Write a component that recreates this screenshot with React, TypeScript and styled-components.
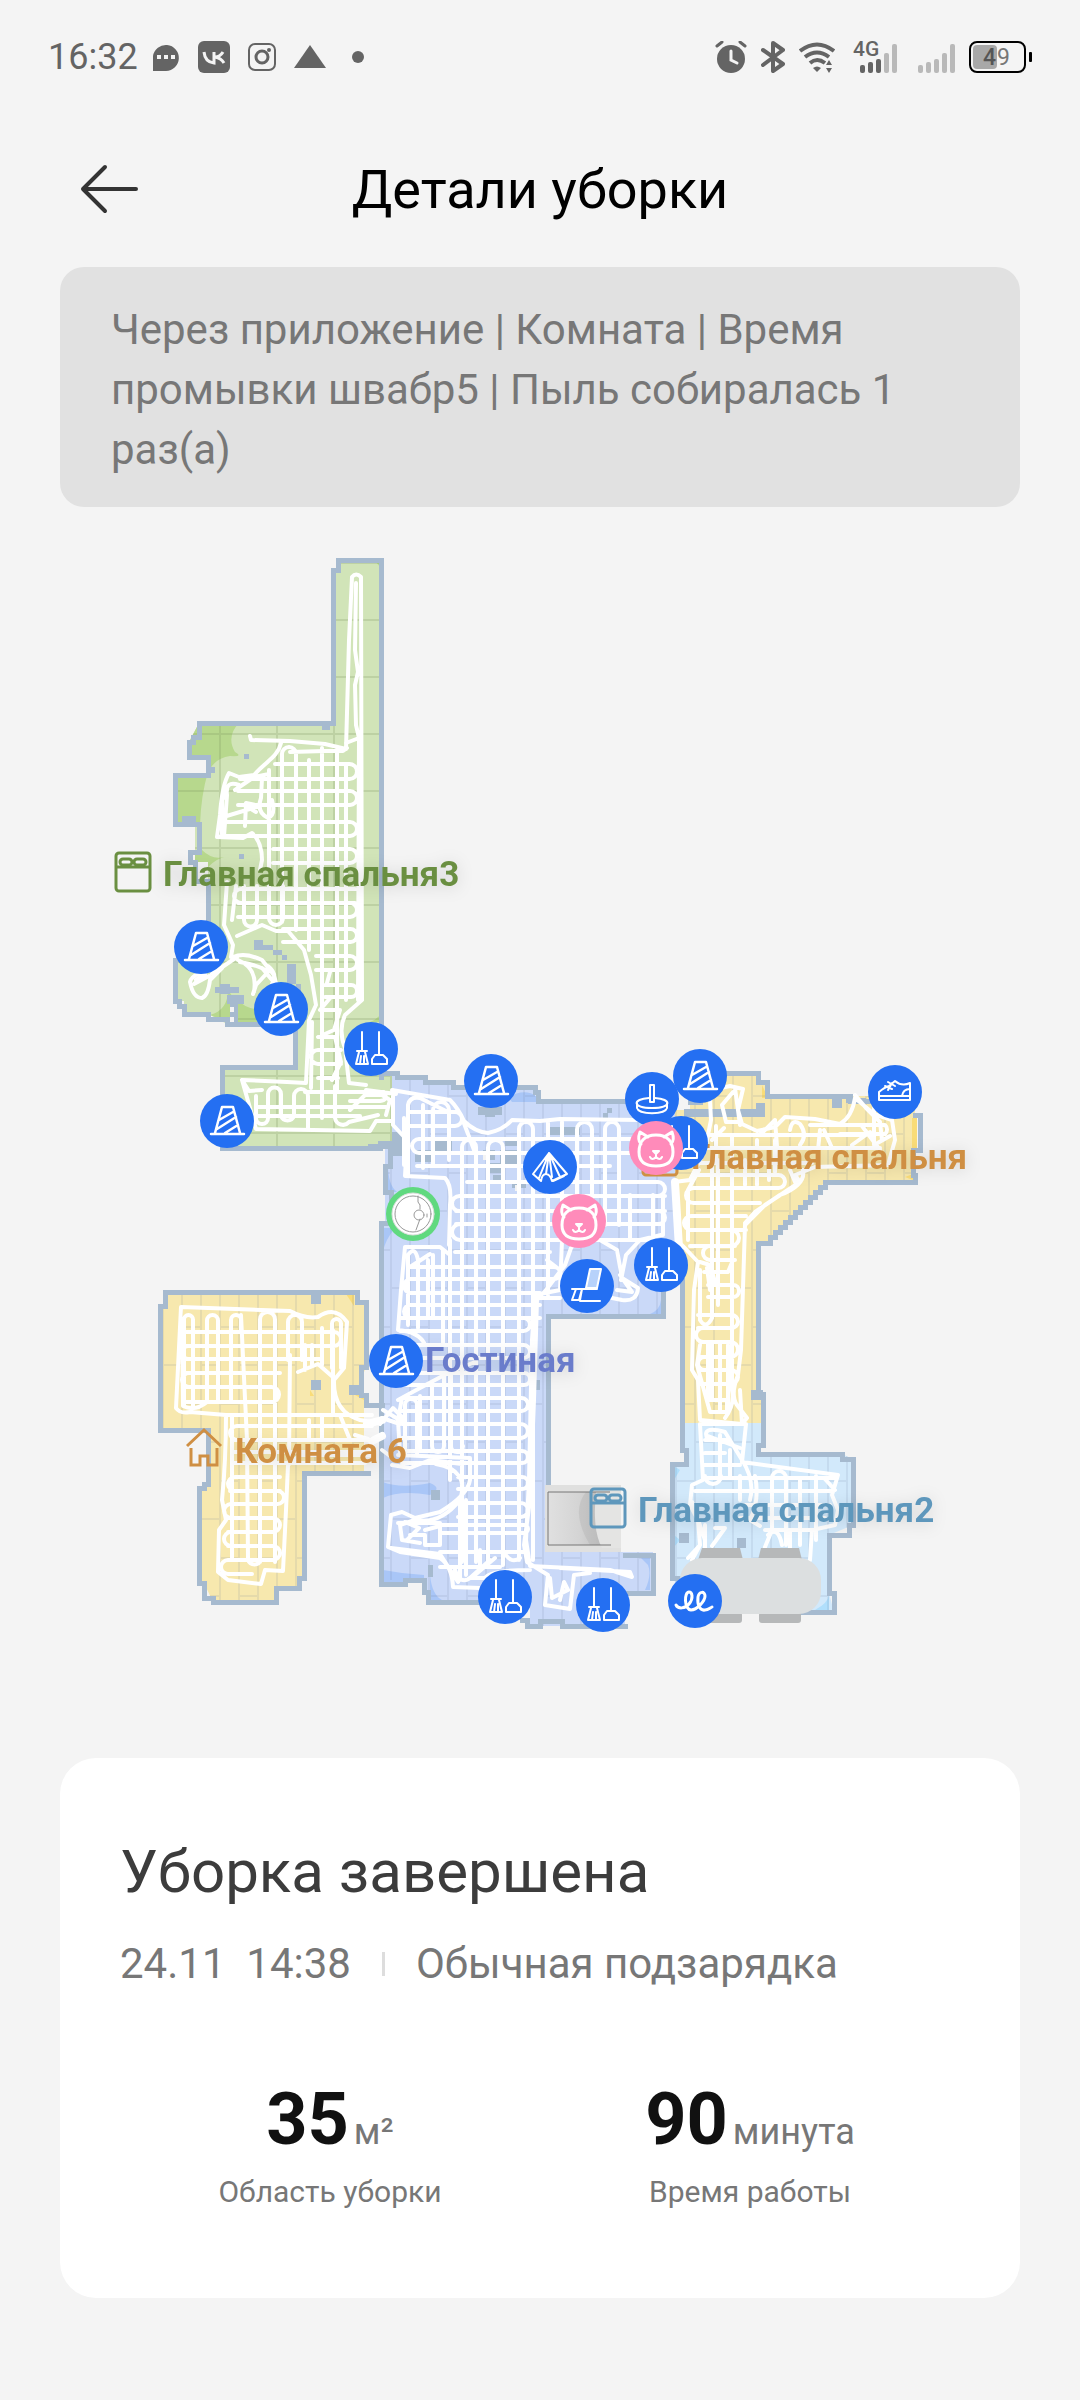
import React from "react";
import styled, { createGlobalStyle } from "styled-components";

const GlobalStyle = createGlobalStyle`
  * { box-sizing: border-box; }
  body {
    margin: 0;
    background: #f4f4f4;
    font-family: Roboto, "Noto Sans", sans-serif;
    color: #777;
  }
  h1, h2, p, dl, dt, dd { margin: 0; font-weight: 400; }
`;

const Page = styled.div`
  display: flex;
  flex-direction: column;
  min-height: 100vh;
`;

const StatusBar = styled.header`
  display: flex;
  align-items: center;
  justify-content: space-between;
  height: 114px;
  padding: 0 48px;
`;

const StatusGroup = styled.div<{ $gap: number }>`
  display: flex;
  align-items: center;
  gap: ${(p) => p.$gap}px;
`;

const Clock = styled.time`
  font-size: 36px;
  line-height: 40px;
  color: #646464;
`;

const Glyph = styled.svg`
  display: block;
  flex: none;
`;

const TitleBar = styled.div`
  display: grid;
  grid-template-columns: 96px 1fr 96px;
  align-items: center;
  height: 153px;
  padding: 0 60px 2px;
`;

const BackButton = styled.button`
  display: flex;
  align-items: center;
  justify-content: center;
  width: 96px;
  height: 96px;
  border: 0;
  padding: 0;
  background: none;
  color: #333;
`;

const Title = styled.h1`
  font-size: 54px;
  line-height: 64px;
  text-align: center;
  color: #000;
`;

const Notice = styled.p`
  margin: 0 60px;
  padding: 33px 51px 27px;
  border-radius: 24px;
  background: #e1e1e1;
  font-size: 42px;
  line-height: 60px;
`;

const MapFigure = styled.figure`
  margin: 0;
`;

const MapCanvas = styled.svg`
  display: block;
  width: 100%;
  height: auto;
`;

const RoomName = styled.text`
  font: 700 35px Roboto, "Noto Sans", sans-serif;
  filter: drop-shadow(0 2px 8px rgba(0, 0, 0, 0.14));
`;

const Summary = styled.section`
  display: flex;
  flex-direction: column;
  margin: 0 60px 102px;
  padding: 78px 60px 88px;
  border-radius: 36px;
  background: #fff;
`;

const SummaryTitle = styled.h2`
  font-size: 60px;
  line-height: 72px;
  color: #3c3c3c;
`;

const Meta = styled.div`
  display: flex;
  align-items: center;
  margin-top: 32px;
  font-size: 42px;
  line-height: 48px;
`;

const MetaTime = styled.time`
  white-space: pre;
`;

const Divider = styled.span`
  width: 3px;
  height: 24px;
  margin: 0 31px;
  background: #ddd;
`;

const Stats = styled.dl`
  display: grid;
  grid-template-columns: 1fr 1fr;
  margin-top: 90px;
`;

const Stat = styled.div`
  display: flex;
  flex-direction: column-reverse;
  align-items: center;
`;

const StatLabel = styled.dt`
  font-size: 30px;
  line-height: 36px;
`;

const StatValue = styled.dd`
  display: flex;
  align-items: baseline;
  gap: 5px;
  font-size: 36px;
  line-height: 84px;
`;

const StatNumber = styled.strong`
  font-size: 72px;
  font-weight: 700;
  color: #111;
`;

/* ---------- robot track helpers ---------- */

/* Horizontal passes, joined in pairs by a round turn at the right end. */
const rows = (x1: number, x2: number, ys: number[]) => {
  let d = "";
  for (let i = 0; i < ys.length; i += 2) {
    const a = ys[i];
    const b = ys[i + 1];
    if (b === undefined) d += `M${x1} ${a}H${x2}`;
    else {
      const r = (b - a) / 2;
      d += `M${x1} ${a}H${x2 - r}a${r} ${r} 0 0 1 0 ${b - a}H${x1}`;
    }
  }
  return d;
};

/* The same, with the turn at the left end. */
const rowsLeft = (x1: number, x2: number, ys: number[]) => {
  let d = "";
  for (let i = 0; i < ys.length; i += 2) {
    const a = ys[i];
    const b = ys[i + 1];
    if (b === undefined) d += `M${x1} ${a}H${x2}`;
    else {
      const r = (b - a) / 2;
      d += `M${x2} ${a}H${x1 + r}a${r} ${r} 0 0 0 0 ${b - a}H${x2}`;
    }
  }
  return d;
};

/* Vertical passes, joined in pairs by a round turn at the top. */
const cols = (y1: number, y2: number, xs: number[]) => {
  let d = "";
  for (let i = 0; i < xs.length; i += 2) {
    const a = xs[i];
    const b = xs[i + 1];
    if (b === undefined) d += `M${a} ${y1}V${y2}`;
    else {
      const r = (b - a) / 2;
      d += `M${a} ${y2}V${y1 + r}a${r} ${r} 0 0 1 ${b - a} 0V${y2}`;
    }
  }
  return d;
};

const TRACKS = [
  // upper-left bedroom
  "M250 736L251 740L290 741L325 744L346 749L349 640L352 577Q356 572 361 577L362 1000",
  "M356 583L355 650L358 672L355 685L356 725L359 738L358 1000M359 738L346 743",
  "M347 748L343 751H325L290 752",
  "M281 743C278 757 265 762 254 775L239 777L229 773Q222 785 220 815L217 837L243 838L252 833Q262 842 262 860L260 870",
  "M239 785Q225 780 227 795L224 836M235 790L254 777L269 774M262 778L261 798Q256 812 268 818Q276 815 272 800M220 818L260 806L246 803L245 826M246 806L256 812",
  "M227 790L222 800V834M227 882L224 925L233 945L231 957M236 886L232 920",
  rows(275, 357, [764, 779, 791, 805]),
  rows(238, 357, [791, 805]),
  rows(240, 346, [779]),
  rows(221, 357, [822, 836]),
  rows(273, 357, [849, 863]),
  rowsLeft(234, 355, [889, 903]),
  rows(238, 357, [903, 917]),
  rows(283, 357, [929, 942]),
  rows(316, 357, [956, 970]),
  rows(325, 357, [985, 997]),
  cols(747, 922, [282, 296]),
  cols(760, 930, [309]),
  cols(748, 1118, [322]),
  cols(750, 1090, [337]),
  cols(765, 1000, [346]),
  cols(770, 868, [269]),
  "M244 886V920a6 6 0 0 0 13 0V886M269 886V918a6 6 0 0 0 14 0V886M296 886V930M309 886V950",
  "M237 936L262 925L276 931L288 931L304 950L311 975L316 1005L309 1020L306 1083L287 1082L242 1080L256 1129L370 1131L376 1121H393",
  "M362 1000L345 1015Q338 1030 345 1048L349 1083L366 1085",
  "M331 997L320 1010H340L334 1030L318 1037H335L341 1062L332 1080M341 1050H318a7 7 0 0 0 0 14H341M318 1078H338M312 1022L311 1088M330 972L327 983",
  "M233 957Q245 952 262 960L274 975L276 983M240 962Q262 966 268 972L256 985L253 994M221 968Q192 972 190 982Q193 998 202 998Q208 996 210 980L222 968M196 980L205 974L194 984L209 976M238 960Q258 968 254 992M212 974L237 957M262 968L272 980M268 966Q278 974 272 984",
  "M242 1080L249 1091L262 1090M256 1096V1118a6 6 0 0 0 12 0V1094a6 6 0 0 1 13 0V1116a7 7 0 0 0 13 0V1096a5 5 0 0 1 14 0V1130M322 1088V1118M335 1086V1118a8 8 0 0 0 14 4L378 1115M350 1110L365 1095H382L390 1100L386 1115",
  "M256 1107H386M258 1116H360M305 1092H384q5 8 -4 9H350M366 1090L396 1094",
  // living room, upper part
  "M392 1090L450 1100Q458 1108 464 1121Q475 1132 488 1133Q503 1130 512 1120L540 1121L560 1119L640 1120L660 1124",
  "M393 1090V1125L407 1140L405 1176L445 1178Q452 1185 450 1205L449 1245",
  "M404 1118V1165M408 1176V1105Q410 1096 420 1098L448 1112M423 1168V1105M433 1165V1110a8 8 0 0 1 16 0V1160M462 1118L474 1150",
  rows(408, 462, [1112, 1126]),
  rowsLeft(412, 600, [1139, 1153]),
  rows(417, 610, [1166]),
  rows(467, 665, [1182, 1196]),
  rowsLeft(452, 665, [1196, 1211]),
  rows(456, 665, [1211, 1224]),
  rowsLeft(452, 660, [1224, 1240]),
  rows(455, 550, [1252]),
  rows(410, 560, [1267, 1279]),
  rowsLeft(404, 540, [1279, 1293, 1305, 1318]),
  rows(400, 530, [1318, 1331, 1345, 1358, 1373, 1385]),
  rows(402, 528, [1398, 1411, 1424, 1438, 1451, 1463]),
  rows(458, 528, [1477, 1489, 1503, 1517]),
  rows(440, 528, [1525, 1533]),
  rows(440, 525, [1552]),
  rows(440, 500, [1567]),
  rows(500, 640, [1139, 1153]),
  cols(1140, 1562, [462, 476]),
  cols(1140, 1565, [488, 503]),
  cols(1122, 1560, [519, 533]),
  cols(1122, 1295, [548]),
  cols(1122, 1240, [562]),
  cols(1122, 1240, [577, 592]),
  cols(1122, 1225, [605, 619]),
  "M562 1240L560 1290L535 1295L532 1340L529 1480L526 1540L530 1566L610 1570L632 1577L630 1572L560 1568",
  "M578 1240L571 1248L565 1265L546 1290L537 1300L534 1400L530 1500L524 1545L527 1562L548 1575L545 1605L570 1609L574 1575L590 1573",
  "M547 1260L560 1270M535 1298H560M600 1240L617 1250L622 1278L638 1288Q637 1302 622 1300L612 1298M617 1290L632 1292L620 1275M621 1280L626 1255L640 1240M653 1195V1240M663 1195V1235M630 1195V1240M640 1240L661 1235",
  "M405 1247H440L450 1255M405 1247L401 1290L398 1330Q420 1332 425 1345M408 1325V1255Q415 1245 418 1260V1328M428 1260V1318M410 1267L430 1254M433 1255V1318M443 1250V1345M450 1240V1480",
  // living room, lower part
  "M398 1400L420 1388L450 1372L475 1362M402 1398L398 1420L400 1454M420 1396V1450M432 1385V1446a6 6 0 0 0 12 0V1374M451 1370V1446a6 6 0 0 0 12 0M405 1454V1405a5 5 0 0 1 12 0V1454M380 1424L393 1408L405 1420M383 1410L403 1422M382 1450L390 1456",
  "M392 1465L410 1468L430 1460L462 1464M398 1455L470 1458V1480Q468 1495 440 1512L415 1518L402 1512L391 1515L388 1547L400 1552L440 1558Q452 1566 453 1587L480 1588",
  "M436 1464Q470 1470 460 1500Q440 1525 415 1520L400 1525L402 1540L420 1543M391 1548L440 1554L458 1582M410 1535H425V1545H440V1526L425 1530M398 1523H440V1535M460 1500V1580M407 1540L419 1528L405 1522M466 1500V1575M455 1570Q460 1585 470 1578L490 1560M470 1578H485Q490 1570 530 1570",
  "M503 1550Q510 1565 520 1558M550 1578L552 1598L568 1590L564 1582L560 1600M382 1418L400 1424M480 1567V1550M475 1575L495 1558",
  // left room
  "M176 1408L181 1307L290 1311Q305 1319 318 1317Q335 1305 347 1322L344 1368L334 1380Q333 1412 360 1420L378 1423",
  "M176 1408Q180 1414 190 1412L226 1415Q226 1460 222 1500L226 1520L219 1530L218 1572L228 1580L261 1584L265 1570L283 1571L286 1510L288 1465L300 1455H370",
  rows(184, 341, [1332, 1346]),
  rows(184, 320, [1359]),
  rows(186, 280, [1373]),
  rowsLeft(182, 270, [1346, 1359, 1373, 1387]),
  rows(186, 279, [1387, 1402]),
  rows(225, 372, [1415]),
  rowsLeft(230, 372, [1426, 1440]),
  rows(232, 372, [1440, 1452]),
  rows(232, 365, [1463]),
  rowsLeft(228, 280, [1477, 1491]),
  rows(230, 284, [1491, 1504]),
  rowsLeft(224, 274, [1504, 1518, 1532, 1546]),
  rows(228, 280, [1518, 1532, 1546, 1560]),
  rowsLeft(221, 252, [1560, 1574]),
  cols(1315, 1406, [184, 193]),
  cols(1315, 1400, [207, 218]),
  cols(1315, 1330, [231, 241]),
  cols(1312, 1562, [260, 275]),
  cols(1315, 1360, [288, 302]),
  cols(1319, 1368, [332, 341]),
  cols(1415, 1560, [232]),
  "M182 1320L183 1406Q195 1412 207 1402M231 1330V1400M241 1315L247 1440L248 1560a7 7 0 0 0 13 0M290 1355L289 1460M298 1372L318 1364L334 1378M305 1345V1370M312 1345V1366M322 1328V1365M309 1420V1440M333 1330V1414M322 1415V1440M340 1415L350 1440M355 1435L368 1439",
  // right bedroom
  "M710 1100L711 1120L705 1150L690 1180L674 1182M743 1089L738 1110L742 1124L757 1131L775 1127L785 1117L815 1119L840 1124Q852 1117 855 1098L874 1114L892 1120L895 1140L888 1165L815 1167L795 1175L800 1182L765 1205L745 1225L741 1350L738 1375Q730 1395 737 1405L747 1418L742 1424L700 1420L698 1380L692 1370L694 1290L698 1262L682 1245",
  "M712 1090L730 1086L743 1089M722 1105L733 1092M722 1105L726 1122H738M735 1088L740 1125M716 1126V1160M712 1140L724 1128M874 1102V1145L890 1136M855 1095L866 1108L880 1122L882 1140M760 1135L775 1120M775 1120L778 1160M790 1130Q792 1118 800 1124Q808 1135 800 1145M820 1130L818 1150M824 1130L832 1148M810 1125H885a6 6 0 0 1 0 9H840M862 1126L880 1150M870 1132L852 1145",
  "M803 1170Q806 1185 780 1195L755 1212L745 1223M790 1170L795 1182M700 1262L710 1265L716 1285M704 1272H728L733 1260M710 1290L707 1268M700 1345L697 1365L710 1412H727V1400H708M708 1343V1400M728 1345V1412L715 1412M742 1424L740 1390",
  rows(706, 860, [1135]),
  rows(704, 880, [1148]),
  rows(700, 812, [1163]),
  rows(694, 785, [1175, 1188]),
  rowsLeft(686, 760, [1188, 1203]),
  rowsLeft(684, 746, [1216, 1230]),
  rows(690, 739, [1230, 1246]),
  rowsLeft(703, 735, [1246, 1260]),
  rows(708, 739, [1285, 1297]),
  rows(698, 738, [1315, 1328]),
  rowsLeft(696, 732, [1328, 1342]),
  rows(700, 738, [1342, 1357]),
  rowsLeft(698, 732, [1357, 1370]),
  rows(700, 738, [1370, 1384]),
  "M699 1170L688 1190V1240M700 1270V1320Q706 1330 712 1318V1160M718 1160V1305M732 1135V1390Q735 1405 725 1418M745 1160V1185M757 1140V1185M769 1165V1180M775 1140V1172M712 1342V1400M720 1342V1410",
  // right bathroom
  "M700 1424H746L742 1462L838 1475L832 1495L838 1510L835 1525L812 1530L810 1560M700 1424L703 1480L692 1485L690 1505L698 1520L700 1545L688 1558",
  "M708 1440Q700 1425 725 1432L742 1460Q755 1480 750 1500M705 1440H730M705 1453H725M703 1465H740M720 1435V1478M730 1450V1478M708 1436L740 1448M705 1476a8 8 0 0 0 16 0M706 1478H835",
  "M695 1491H833M740 1476V1500M755 1476Q760 1500 750 1520L760 1526M772 1500V1478a7 7 0 0 1 14 0V1545M800 1480V1545M816 1476V1540M824 1478L835 1490M772 1500V1530L765 1547M692 1502L705 1540M715 1528H725L712 1546M768 1535Q778 1525 782 1545M765 1530H812M740 1505H830M740 1518H825M790 1530V1548M700 1545L692 1560M705 1525V1548",
].join("");

const WALL_LINES = [
  "M338 560H381V1077M338 560V570H333V723H199V737H193V742H189V757H208V775H175V824H199V852H190V862H195V881H208V940M175 960V1001H179V1006H184V1014H208V1019H227V1024H295V1067H222V1148H380V1143H392",
  "M386 1073H397V1077H425V1082H453V1087H535V1092H538V1101H640",
  "M370 1146H390V1166H385V1192H391V1210M381 1223H391M381 1223V1584H405V1580H424V1592H428V1602H480M522 1620H527V1626H540V1621H562V1626H625M625 1593H653V1555H625",
  "M548 1490V1316H663V1285",
  "M690 1102H700M720 1073H758V1082H767V1096H850V1101H880M915 1115H920V1150H913V1175H915V1182H825V1187H820V1192H815V1197H810V1202H805V1207H800V1212H795V1217H790V1222H785V1227H780V1232H775V1237H770V1243H758V1394H763V1445H758V1454H842V1459H853V1525H849V1535H829V1593H834V1612H800",
  "M682 1280V1450H686V1464H672V1578H682",
  "M165 1292H357V1302H366V1367H361V1395M366 1395V1405H382M368 1473H304V1578H299V1588H276V1602H213V1598H204V1583H199V1488H204V1484H208V1430H160V1306H165V1292",
].join("");

const OBSTACLES: [number, number, number, number][] = [
  [322, 723, 8, 7], [244, 754, 5, 5], [239, 854, 5, 5], [209, 767, 6, 6], [182, 816, 14, 6],
  [254, 940, 9, 10], [263, 945, 10, 5], [273, 950, 9, 5], [282, 955, 5, 5], [287, 964, 9, 20],
  [215, 987, 24, 6], [220, 984, 10, 10], [227, 995, 17, 9], [230, 1004, 8, 18], [296, 984, 5, 8],
  [478, 1107, 24, 8], [485, 1112, 10, 5], [607, 1108, 5, 5], [603, 1113, 5, 5],
  [392, 1132, 10, 24], [432, 1140, 20, 12], [415, 1150, 20, 12], [483, 1150, 12, 10], [490, 1163, 12, 10],
  [550, 1127, 30, 8], [500, 1150, 18, 14], [493, 1175, 9, 5], [505, 1140, 14, 6], [512, 1180, 14, 8],
  [311, 1292, 10, 12], [311, 1380, 10, 10], [349, 1385, 14, 10], [431, 1490, 9, 10], [533, 1380, 7, 10], [428, 1565, 5, 12],
  [684, 1109, 80, 8], [756, 1103, 9, 14], [832, 1096, 10, 12], [846, 1098, 20, 5], [751, 1390, 12, 10],
  [679, 1533, 10, 10], [737, 1538, 9, 10],
];

const GREEN_ROOM =
  "M338 560H381V1074H392V1146H222V1067H295V1024H227L208 1014H184V1001H175V960H208V862H195V824H175V775H208V757H189V742L199 723H333V570H338Z";
const LIVING_ROOM =
  "M392 1075H425V1082H453V1087H535V1101H675V1250H663V1316H548V1552H653V1593H625V1626H530V1602H428V1592H424V1580H381V1223H385V1146H392Z";
const RIGHT_ROOM =
  "M690 1073H758V1082H767V1096H915V1182H825L767 1243H758V1394H763V1423H682V1250H675V1110H690Z";
const BATH_ROOM =
  "M682 1423H763V1445L758 1454H842L853 1459V1525L829 1535V1593L834 1612H700L672 1578V1464H686V1450H682Z";
const LEFT_ROOM =
  "M165 1292H357V1302H366V1367L361 1380L364 1395V1473H304V1578H299V1588H276V1602H213L204 1583H199V1488L208 1484V1430H160V1306H165Z";

/* ---------- map pins ---------- */

type PinKind = "cone" | "broom" | "mop" | "tent" | "chair" | "cat" | "shoe" | "cable" | "dock";

const PIN_ART: Record<PinKind, React.ReactNode> = {
  cone: (
    <>
      <path d="M-16 13H17M-12 12L-5 -14H6L13 12M-8 -1L6 -9M-10 8L9 -4M-2 12L11 4" />
    </>
  ),
  broom: (
    <g strokeWidth="2">
      <path d="M-9 -17V2M-14 2H-4M-12 3L-15 15H-3L-6 3M-10 7L-11 15M-7 7V15" />
      <path d="M8 -17V6M1 15V10L4 6H12L16 10V15Z" />
    </g>
  ),
  mop: (
    <g strokeWidth="2">
      <path d="M-2 3V-14H2V3Z" />
      <path d="M-3 -1C-20 0 -20 9 0 9C20 9 20 0 3 -1M-15 4V9C-13 16 13 16 15 9V4" />
    </g>
  ),
  tent: (
    <g strokeWidth="2">
      <path d="M-1 -14L-17 7L-9 14Q-8 7 -4 7Q0 7 2 14L17 7ZM-1 -14L-11 11M-1 -14L-4 7M-1 -14L2 10M-1 -14L10 10M3 14L14 9" />
    </g>
  ),
  chair: (
    <g strokeWidth="2">
      <path d="M3 -17H14L10 2H-1Z" fill="#b7d2fb" />
      <path d="M-15 3H10M-11 3L-15 14H-8L-5 3M-5 3L-7 14M-7 15H13" />
    </g>
  ),
  cat: (
    <g strokeWidth="3">
      <path d="M-8 -11L-16 -16Q-19 -8 -15 -4M8 -11L16 -16Q19 -8 15 -4" />
      <path d="M0 -13C12 -13 17 -6 17 4C17 14 10 18 0 18C-10 18 -17 14 -17 4C-17 -6 -12 -13 0 -13Z" />
      <path d="M-3 3H3L0 6ZM0 6V9M-6 9Q-4 13 0 9Q4 13 6 9" strokeWidth="2" />
    </g>
  ),
  shoe: (
    <g strokeWidth="2">
      <path d="M-16 8V0Q-10 -5 -6 -6L0 -11Q7 -5 15 -9V8ZM-16 4H15M7 4Q8 -3 15 -3M-10 -6L-3 -3M-7 -10L0 -6M-7 -2L-3 -9" />
    </g>
  ),
  cable: (
    <path
      strokeWidth="3"
      d="M-19 4C-17 8 -10 8 -6 3C-1 -3 -3 -9 -6 -9C-11 -9 -11 8 -4 9C2 9 10 0 10 -5C10 -10 4 -10 3 -4C2 4 5 10 10 9C13 9 15 7 17 6"
    />
  ),
  dock: (
    <g stroke="#999" strokeWidth="1">
      <circle r="21" fill="#fff" stroke="#ddd" />
      <circle r="18" />
      <path d="M5 -18V-12L7 -9V-5M7 5L3 16" />
      <circle cx="6" cy="1" r="5" />
      <path d="M14 0V3" />
    </g>
  ),
};

const PIN_FILL: Partial<Record<PinKind, string>> = { cat: "#ff8bba", dock: "#60d97f" };

const PINS: [PinKind, number, number][] = [
  ["cone", 201, 947], ["cone", 281, 1009], ["broom", 371, 1049], ["cone", 227, 1121],
  ["cone", 491, 1081], ["mop", 652, 1099], ["cone", 700, 1076], ["broom", 681, 1143],
  ["cat", 656, 1148], ["tent", 550, 1167], ["cat", 579, 1221], ["broom", 661, 1265],
  ["chair", 587, 1286], ["dock", 413, 1214], ["cone", 396, 1361], ["shoe", 895, 1092],
  ["broom", 505, 1597], ["broom", 603, 1605], ["cable", 695, 1601],
];

const Pin = ({ kind, x, y }: { kind: PinKind; x: number; y: number }) => (
  <g transform={`translate(${x} ${y})`} fill="none" stroke="#fff" strokeWidth="2.5" strokeLinecap="round" strokeLinejoin="round">
    <circle r="27" fill={PIN_FILL[kind] ?? "#246ff2"} stroke="none" />
    {PIN_ART[kind]}
  </g>
);

const BedMark = ({ x, y, color }: { x: number; y: number; color: string }) => (
  <g transform={`translate(${x} ${y})`} fill="none" stroke={color} strokeWidth="3">
    <rect x="1" y="1" width="34" height="38" rx="3" />
    <path d="M1 15H35" />
    <rect x="5" y="7" width="12" height="6" rx="3" />
    <rect x="19" y="7" width="12" height="6" rx="3" />
  </g>
);

const HomeMap = () => (
  <MapFigure>
    <MapCanvas viewBox="0 507 1080 1251" role="img" aria-label="Карта уборки">
      <defs>
        <pattern id="tiles" width="57" height="57" x="219" y="619" patternUnits="userSpaceOnUse">
          <path d="M0 1H57M1 0V57" stroke="#7f9660" strokeOpacity=".24" strokeWidth="2" fill="none" />
        </pattern>
        <pattern id="planks" width="38" height="77" x="181" y="1326" patternUnits="userSpaceOnUse">
          <path d="M1 0V77M20 0V77M1 1H20M20 39H38" stroke="#69789a" strokeOpacity=".13" strokeWidth="2" fill="none" />
        </pattern>
        <linearGradient id="bed" x1="0" x2="1">
          <stop offset="0" stopColor="#e0e0e0" />
          <stop offset=".5" stopColor="#d4d4d4" />
          <stop offset="1" stopColor="#b9b9b9" />
        </linearGradient>
        <clipPath id="greenClip"><path d={GREEN_ROOM} /></clipPath>
      </defs>

      <path d={GREEN_ROOM} fill="#d1e4b8" />
      <g clipPath="url(#greenClip)" fill="#b7d88d">
        <path d="M195 720H242Q225 735 235 752Q244 757 230 756Q215 758 208 772Q201 795 200 825H170V720Z" />
        <path d="M190 850H202Q212 860 224 857Q208 862 200 880H190ZM210 1015Q228 1010 228 990L235 1000V1025ZM238 1000Q246 1010 265 1010V1025H238ZM374 560H381V568ZM381 1014Q376 1020 370 1022H381Z" />
      </g>
      <path d={LIVING_ROOM} fill="#cad9f8" />
      <path
        d="M383 1482Q400 1489 430 1483Q443 1488 430 1495Q400 1490 383 1498ZM383 1570L402 1573L424 1575V1582H383ZM430 1575Q432 1595 442 1600H430ZM508 1097Q525 1088 536 1096V1102H512ZM383 1228H395Q385 1240 383 1252ZM388 1165V1192H397Q388 1185 388 1165ZM661 1300Q660 1310 650 1314H661ZM640 1557H650V1590H645Q652 1575 648 1565Z"
        fill="#a9c6f7"
      />
      <path d={RIGHT_ROOM} fill="#f7e8ae" />
      <path d={LEFT_ROOM} fill="#f7e8ae" />
      <path d="M912 1118H917V1148H912ZM905 1177L913 1174V1180ZM762 1085V1098H768ZM346 1294L354 1295V1306ZM310 1390V1396H314ZM355 1395H364V1400Z" fill="#f9dc78" />
      <path d={BATH_ROOM} fill="#d2e9fb" />
      <path d="M674 1466L680 1470L674 1480ZM674 1535L680 1540L674 1547ZM829 1595V1610H815Q828 1603 829 1595Z" fill="#b0dffc" />
      <path d={GREEN_ROOM} fill="url(#tiles)" />
      <path d={LIVING_ROOM + RIGHT_ROOM + LEFT_ROOM + BATH_ROOM} fill="url(#planks)" />

      <path d={WALL_LINES} fill="none" stroke="#a6bacf" strokeWidth="5" strokeLinecap="square" shapeRendering="crispEdges" />
      <g fill="#a6bacf">
        {OBSTACLES.map(([x, y, w, h]) => (
          <rect key={`${x}-${y}`} x={x} y={y} width={w} height={h} />
        ))}
      </g>
      <g fill="#f4f4f4">
        <path d="M230 1007h4v5h-4zM230 1017h4v5h-4zM483 1155h5v5h-5zM515 1185h4v6h-4z" />
      </g>

      <path d={TRACKS} fill="none" stroke="#fff" strokeWidth="4" strokeLinecap="round" strokeLinejoin="round" />
      <path d="M675 1182L679 1248M367 1424L382 1420M374 1440L382 1436" stroke="#fff" strokeWidth="8" fill="none" strokeLinecap="round" />

      {/* bed */}
      <rect x="545" y="1485" width="76" height="67" fill="#e0e0df" />
      <path d="M548 1492H610V1545H548Z" fill="url(#bed)" />
      <path d="M586 1492H621V1545H590Q570 1512 586 1492Z" fill="#b5b5b5" opacity=".45" />
      <path d="M596 1492H621V1548H602Q592 1530 596 1492Z" fill="#e4e4e3" />
      <path d="M548 1545V1492H610M548 1545H611" fill="none" stroke="#777" strokeWidth="1" />

      {/* dining table with chairs */}
      <g fill="#b6b8b9">
        <path d="M702 1548H740L743 1560H698Z" />
        <path d="M761 1548H799L802 1560H758Z" />
        <rect x="700" y="1612" width="42" height="11" rx="3" />
        <rect x="759" y="1612" width="42" height="11" rx="3" />
      </g>
      <rect x="680" y="1558" width="141" height="56" rx="22" fill="#dcdfe0" />

      <BedMark x={115} y={852} color="#6a8f41" />
      <BedMark x={642} y={1136} color="#cf8f43" />
      <BedMark x={590} y={1488} color="#5e97bc" />
      <path
        d="M187 1446L204 1430L221 1446M191 1448V1465H200V1456H208V1465H217V1448"
        fill="none" stroke="#cf8f43" strokeWidth="3"
      />
      <RoomName x="163" y="886" fill="#6a8f41">Главная спальня3</RoomName>
      <RoomName x="425" y="1372" fill="#6a7ccb">Гостиная</RoomName>
      <RoomName x="691" y="1169" fill="#cf8f43">Главная спальня</RoomName>
      <RoomName x="235" y="1463" fill="#cf8f43">Комната 6</RoomName>
      <RoomName x="638" y="1522" fill="#5e97bc">Главная спальня2</RoomName>

      {PINS.map(([kind, x, y]) => (
        <Pin key={`${x}-${y}`} kind={kind} x={x} y={y} />
      ))}
    </MapCanvas>
  </MapFigure>
);

/* ---------- status bar glyphs ---------- */

const GREY = "#646464";
const PALE = "#b9b9b9";

const Notifications = () => (
  <StatusGroup $gap={18}>
    <Glyph width="28" height="32" viewBox="0 0 28 32">
      <path d="M1 30V15A13 13 0 1 1 14 30Z" fill={GREY} />
      <path d="M5 16h4M12 16h4M19 16h4" stroke="#f4f4f4" strokeWidth="4" />
    </Glyph>
    <Glyph width="32" height="32" viewBox="0 0 32 32">
      <rect width="32" height="32" rx="6" fill={GREY} />
      <path d="M6 11Q7 21 16 22V11M25 11Q22 16 17 16Q23 17 26 22" fill="none" stroke="#f4f4f4" strokeWidth="3" />
    </Glyph>
    <Glyph width="28" height="32" viewBox="0 0 28 32">
      <rect x="1" y="3" width="26" height="26" rx="6" fill="none" stroke={GREY} strokeWidth="2" />
      <circle cx="14" cy="16" r="6" fill="none" stroke={GREY} strokeWidth="3" />
      <circle cx="21" cy="9" r="2" fill={GREY} />
    </Glyph>
    <Glyph width="32" height="32" viewBox="0 0 32 32">
      <path d="M16 4L32 27H0Z" fill={GREY} />
    </Glyph>
    <Glyph width="28" height="32" viewBox="0 0 28 32">
      <circle cx="14" cy="16" r="6" fill={GREY} />
    </Glyph>
  </StatusGroup>
);

const SIGNAL = [8, 11, 14, 20, 29];

const Bars = ({ x, active }: { x: number; active: number }) => (
  <>
    {SIGNAL.map((h, i) => (
      <rect key={h} x={x + i * 8} y={32 - h} width="5" height={h} rx="2" fill={i < active ? GREY : PALE} />
    ))}
  </>
);

const System = () => (
  <StatusGroup $gap={14}>
    <Glyph width="32" height="32" viewBox="0 0 32 32">
      <circle cx="16" cy="18" r="14" fill={GREY} />
      <path d="M2 5L7 1M30 5L25 1" stroke={GREY} strokeWidth="3" strokeLinecap="round" />
      <path d="M16 10V19L22 22" fill="none" stroke="#f4f4f4" strokeWidth="3" strokeLinecap="round" />
    </Glyph>
    <Glyph width="24" height="32" viewBox="0 0 24 32">
      <path d="M2 9L22 23L12 30V2L22 9L2 24" fill="none" stroke={GREY} strokeWidth="4" strokeLinecap="round" strokeLinejoin="round" />
    </Glyph>
    <Glyph width="36" height="32" viewBox="0 0 36 32">
      <path d="M1 10Q18 -3 35 10M6 16Q18 7 30 16M11 22Q18 16 26 22" fill="none" stroke={GREY} strokeWidth="4" />
      <path d="M14 27Q18 24 22 27L18 31ZM27 24L30 19L33 24ZM27 27H33L30 32Z" fill={GREY} />
    </Glyph>
    <Glyph width="50" height="40" viewBox="0 -4 50 40">
      <text x="4" y="15" fontFamily="Roboto" fontSize="21" fontWeight="500" fill={GREY}>4G</text>
      <Bars x={11} active={3} />
    </Glyph>
    <Glyph width="42" height="32" viewBox="0 0 42 32">
      <Bars x={5} active={0} />
    </Glyph>
    <Glyph width="63" height="32" viewBox="0 0 63 32">
      <rect x="1" y="1" width="55" height="30" rx="7" fill="none" stroke="#000" strokeWidth="2" />
      <rect x="4" y="4" width="24" height="24" rx="4" fill="#a8a8a8" />
      <rect x="60" y="11" width="3" height="10" rx="1" fill="#000" />
      <text x="14" y="24" fontFamily="Roboto" fontSize="23" fill="#555" fontWeight="500">4</text>
      <text x="28" y="24" fontFamily="Roboto" fontSize="23" fill="#777">9</text>
    </Glyph>
  </StatusGroup>
);

export default function App() {
  return (
    <Page>
      <GlobalStyle />
      <StatusBar>
        <StatusGroup $gap={14}>
          <Clock>16:32</Clock>
          <Notifications />
        </StatusGroup>
        <System />
      </StatusBar>
      <TitleBar>
        <BackButton type="button" aria-label="Назад">
          <Glyph width="60" height="52" viewBox="0 0 60 52">
            <path d="M27 3L5 25L27 47M5 25H58" fill="none" stroke="currentColor" strokeWidth="4" strokeLinecap="round" strokeLinejoin="round" />
          </Glyph>
        </BackButton>
        <Title>Детали уборки</Title>
      </TitleBar>
      <Notice>Через приложение | Комната | Время промывки швабр5 | Пыль собиралась 1 раз(а)</Notice>
      <HomeMap />
      <Summary>
        <SummaryTitle>Уборка завершена</SummaryTitle>
        <Meta>
          <MetaTime>24.11{"  "}14:38</MetaTime>
          <Divider />
          <span>Обычная подзарядка</span>
        </Meta>
        <Stats>
          <Stat>
            <StatLabel>Область уборки</StatLabel>
            <StatValue><StatNumber>35</StatNumber>м²</StatValue>
          </Stat>
          <Stat>
            <StatLabel>Время работы</StatLabel>
            <StatValue><StatNumber>90</StatNumber>минута</StatValue>
          </Stat>
        </Stats>
      </Summary>
    </Page>
  );
}
